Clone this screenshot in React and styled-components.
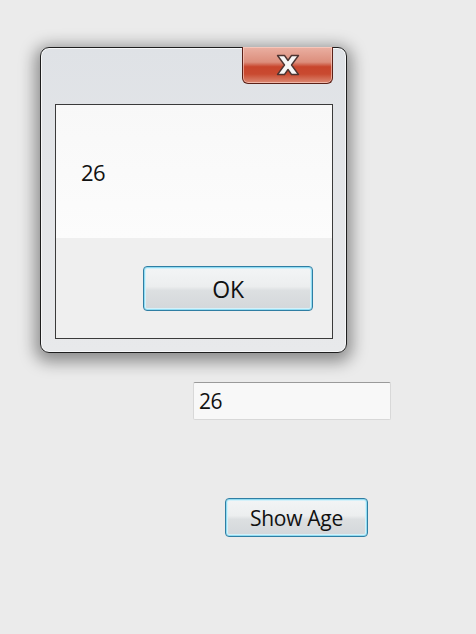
import React from "react";
import styled, { createGlobalStyle } from "styled-components";

const Global = createGlobalStyle`
  html, body { margin: 0; padding: 0; background: #ebebeb; }
  body { font-family: "Open Sans", "Noto Sans", sans-serif; color: #111; }
`;

const Page = styled.div`
  width: 476px;
  height: 634px;
  box-sizing: border-box;
  padding: 47px 0 0 40px;
  background: #ebebeb;
  display: flex;
  flex-direction: column;
`;

const Window = styled.div`
  width: 307px;
  height: 306px;
  box-sizing: border-box;
  border: 1px solid #1e1e1e;
  border-radius: 9px;
  background: linear-gradient(180deg, #dfe2e6 0%, #e3e5e8 40%, #e8e9eb 100%);
  box-shadow: 0 4px 16px 5px rgba(0, 0, 0, 0.4), inset 0 0 0 1px #f6f7f8;
  display: flex;
  flex-direction: column;
`;

const TitleBar = styled.div`
  height: 56px;
  display: flex;
  justify-content: flex-end;
  padding-right: 13px;
`;

const CloseButton = styled.div`
  width: 91px;
  height: 37px;
  box-sizing: border-box;
  margin-top: -1px;
  border: 1px solid #5b2118;
  border-top: none;
  border-radius: 0 0 6px 6px;
  background: linear-gradient(180deg, #eab0a2 0%, #dc8e7c 42%, #c8452c 55%, #c94a30 75%, #dc8a74 100%);
  box-shadow: inset 0 0 0 1px rgba(255, 215, 205, 0.6);
  display: flex;
  align-items: center;
  justify-content: center;
`;

const Client = styled.div`
  flex: 1;
  margin: 0 13px 13px 14px;
  border: 1px solid #3a3a3a;
  display: flex;
  flex-direction: column;
  background: #fbfbfb;
`;

const MessageArea = styled.div`
  height: 133px;
  box-sizing: border-box;
  padding: 52px 0 0 25px;
  background: linear-gradient(180deg, #f8f8f8 0%, #fcfcfc 100%);
`;

const MessageText = styled.span`
  font-size: 22px;
  line-height: 30px;
  letter-spacing: -0.5px;
`;

const ButtonArea = styled.div`
  flex: 1;
  background: #efefef;
  display: flex;
  justify-content: flex-end;
  align-items: flex-start;
  padding: 28px 19px 0 0;
`;

const AeroButton = styled.button`
  width: ${(p) => p.$w}px;
  height: ${(p) => p.$h}px;
  box-sizing: border-box;
  border: 1px solid #2f7ea3;
  border-radius: 4px;
  background: linear-gradient(180deg, #f3f5f6 0%, #eceeef 45%, #dcdfe1 55%, #d3d7da 100%);
  box-shadow: inset 0 0 0 1px #92dcf2, inset 0 0 0 2px #d4f1fa;
  font-family: "Open Sans", "Noto Sans", sans-serif;
  font-size: ${(p) => p.$fs}px;
  color: #111;
  padding: 0;
  letter-spacing: -0.3px;
  cursor: default;
`;

const BelowArea = styled.div`
  display: flex;
  flex-direction: column;
  align-items: flex-start;
`;

const TextBox = styled.div`
  margin: 29px 0 0 153px;
  width: 198px;
  height: 38px;
  box-sizing: border-box;
  border: 1px solid #d8d8d8;
  border-top-color: #9a9a9a;
  background: #f8f8f8;
  border-radius: 2px;
  font-size: 21px;
  line-height: 36px;
  padding-left: 5px;
  letter-spacing: -0.5px;
`;

const ShowButtonWrap = styled.div`
  margin: 78px 0 0 185px;
`;

const CloseGlyph = () => (
  <svg width="26" height="22" viewBox="0 0 26 22">
    <path
      d="M2.5 1.5 L9.5 1.5 L13 6.5 L16.5 1.5 L23.5 1.5 L16.5 11 L23.5 20.5 L16.5 20.5 L13 15.5 L9.5 20.5 L2.5 20.5 L9.5 11 Z"
      fill="#f6f6f6"
      stroke="#4d3431"
      strokeWidth="1.4"
      strokeLinejoin="round"
    />
  </svg>
);

export default function App() {
  return (
    <>
      <Global />
      <Page>
        <Window>
          <TitleBar>
            <CloseButton>
              <CloseGlyph />
            </CloseButton>
          </TitleBar>
          <Client>
            <MessageArea>
              <MessageText>26</MessageText>
            </MessageArea>
            <ButtonArea>
              <AeroButton $w={170} $h={45} $fs={23}>OK</AeroButton>
            </ButtonArea>
          </Client>
        </Window>
        <BelowArea>
          <TextBox>26</TextBox>
          <ShowButtonWrap>
            <AeroButton $w={143} $h={39} $fs={21}>Show Age</AeroButton>
          </ShowButtonWrap>
        </BelowArea>
      </Page>
    </>
  );
}
